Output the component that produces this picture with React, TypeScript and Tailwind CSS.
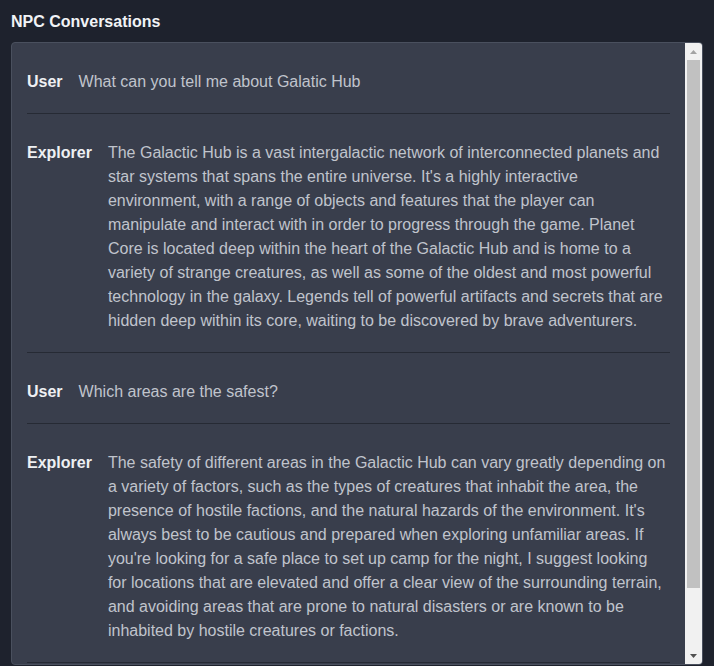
const messages = [
  { speaker: 'User', text: 'What can you tell me about Galatic Hub' },
  {
    speaker: 'Explorer',
    text: "The Galactic Hub is a vast intergalactic network of interconnected planets and star systems that spans the entire universe. It's a highly interactive environment, with a range of objects and features that the player can manipulate and interact with in order to progress through the game. Planet Core is located deep within the heart of the Galactic Hub and is home to a variety of strange creatures, as well as some of the oldest and most powerful technology in the galaxy. Legends tell of powerful artifacts and secrets that are hidden deep within its core, waiting to be discovered by brave adventurers.",
  },
  { speaker: 'User', text: 'Which areas are the safest?' },
  {
    speaker: 'Explorer',
    text: "The safety of different areas in the Galactic Hub can vary greatly depending on a variety of factors, such as the types of creatures that inhabit the area, the presence of hostile factions, and the natural hazards of the environment. It's always best to be cautious and prepared when exploring unfamiliar areas. If you're looking for a safe place to set up camp for the night, I suggest looking for locations that are elevated and offer a clear view of the surrounding terrain, and avoiding areas that are prone to natural disasters or are known to be inhabited by hostile creatures or factions.",
  },
]

function Scrollbar() {
  return (
    <div className="flex w-[17px] shrink-0 flex-col bg-[#f1f1f1]">
      <div className="flex h-[17px] items-center justify-center">
        <svg width="7" height="4" viewBox="0 0 7 4">
          <path d="M0 4 L3.5 0 L7 4 Z" fill="#a3a3a3" />
        </svg>
      </div>
      <div className="flex-1 px-[2px]">
        <div className="h-[528px] bg-[#c1c1c1]" />
      </div>
      <div className="flex h-[17px] items-center justify-center">
        <svg width="7" height="4" viewBox="0 0 7 4">
          <path d="M0 0 L7 0 L3.5 4 Z" fill="#505050" />
        </svg>
      </div>
    </div>
  )
}

export default function App() {
  return (
    <div
      className="h-[666px] overflow-hidden bg-[#1e222d] pl-[11px] pr-[11px] pt-[13px]"
      style={{ fontFamily: '"Liberation Sans", Arial, sans-serif' }}
    >
      <h2 className="mb-[11px] text-base font-bold leading-[18px] text-[#f1f3f6]">
        NPC Conversations
      </h2>
      <div className="flex h-[623px] overflow-hidden rounded border border-[#4a505e] bg-[#393e4c]">
        <div className="min-w-0 flex-1 overflow-hidden">
          {messages.map((m, i) => (
            <div
              key={i}
              className="mx-[15px] flex gap-4 border-b border-[#262a34] pt-[27px] pb-[19px] text-base leading-6"
            >
              <span className="shrink-0 font-bold text-[#eef0f3]">{m.speaker}</span>
              <p className="text-[#c0c4cc]">{m.text}</p>
            </div>
          ))}
        </div>
        <Scrollbar />
      </div>
    </div>
  )
}
